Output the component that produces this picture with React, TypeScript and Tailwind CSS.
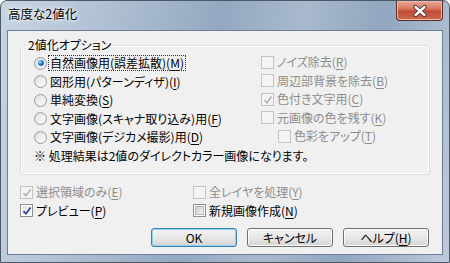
import React from "react";

const U = ({ c }: { c: string }) => <span className="underline underline-offset-[2px]">{c}</span>;

function Radio({ checked }: { checked?: boolean }) {
  return (
    <span className="relative flex h-[13px] w-[13px] shrink-0 items-center justify-center rounded-full border border-[#9a9da1] bg-gradient-to-br from-[#d8dadc] to-[#f8f8f8]">
      <span className="h-[9px] w-[9px] rounded-full bg-gradient-to-br from-[#e2e2e2] to-[#fbfbfb]" />
      {checked && (
        <span className="absolute left-[2.5px] top-[2.5px] h-[6px] w-[6px] rounded-full bg-[radial-gradient(circle_at_35%_35%,#9fd8ff_0%,#2a7fd0_45%,#0f3f8a_100%)]" />
      )}
    </span>
  );
}

function Check({ checked, disabled }: { checked?: boolean; disabled?: boolean }) {
  return (
    <span
      className={
        "relative flex h-[13px] w-[13px] shrink-0 items-center justify-center border " +
        (disabled ? "border-[#c4c4c4] bg-[#f4f4f4]" : "border-[#8f8f8f] bg-white")
      }
    >
      {!disabled && !checked && (
        <span className="h-[9px] w-[9px] border border-[#b6b6b6] bg-gradient-to-br from-[#cfcfcf] to-[#f2f2f2]" />
      )}
      {!disabled && checked && (
        <span className="h-[9px] w-[9px] bg-gradient-to-br from-[#e4e4e4] to-[#fafafa]" />
      )}
      {checked && (
        <svg className="absolute left-[1px] top-[1px]" width="10" height="10" viewBox="0 0 10 10">
          <path
            d="M1.5 5.2 L4 7.8 L8.6 1.6"
            fill="none"
            stroke={disabled ? "#b5b5b5" : "#2c418e"}
            strokeWidth="1.7"
          />
        </svg>
      )}
    </span>
  );
}

function RadioRow({ checked, children, focus }: { checked?: boolean; children: React.ReactNode; focus?: boolean }) {
  return (
    <div className="flex h-[18.5px] items-center gap-[2px]">
      <Radio checked={checked} />
      <span className={"px-[1px] leading-[14px] " + (focus ? "outline outline-1 outline-dotted outline-[#333]" : "")}>{children}</span>
    </div>
  );
}

function CheckRow({
  checked,
  disabled,
  children,
  className = "",
}: {
  checked?: boolean;
  disabled?: boolean;
  children: React.ReactNode;
  className?: string;
}) {
  return (
    <div className={"flex h-[18.5px] items-center gap-[3px] " + className}>
      <Check checked={checked} disabled={disabled} />
      <span className={disabled ? "text-[#8d8d8d]" : "text-[#000]"}>{children}</span>
    </div>
  );
}

function Btn({ children, def }: { children: React.ReactNode; def?: boolean }) {
  return (
    <div
      className={
        "flex h-[19px] w-[86px] items-center justify-center rounded-[3px] border bg-gradient-to-b from-[#f3f3f3] via-[#e8e8e8] to-[#d3d3d3] text-[#000] " +
        (def ? "border-[#3c7fb1] shadow-[inset_0_0_0_1px_#8fd3f5]" : "border-[#707070] shadow-[inset_0_0_0_1px_#fbfbfb]")
      }
    >
      {children}
    </div>
  );
}

export default function App() {
  return (
    <div className="h-[263px] w-[450px] overflow-hidden font-['Noto_Sans_CJK_JP',sans-serif] text-[12px] text-[#000] [font-feature-settings:'palt']">
      <div className="flex h-full w-full flex-col rounded-t-[7px] border border-[#4d5866] bg-[linear-gradient(100deg,#c7d4e2_0%,#b2c2d5_20%,#93a8c1_45%,#a8b9cd_62%,#91a6bf_78%,#bccadb_100%)]">
        <div className="flex h-[29px] shrink-0 items-start justify-between">
          <div className="pl-[7px] pt-[5px] text-[12.5px] leading-[16px] text-black [text-shadow:0_0_6px_#ffffff,0_0_3px_#ffffff]">
            高度な2値化
          </div>
          <div className="mr-[6px] flex h-[20px] w-[47px] items-center justify-center rounded-b-[4px] border border-t-0 border-[#5a2c26] bg-[linear-gradient(180deg,#e9a99b_0%,#d9785f_40%,#c24a33_55%,#cf6a4f_100%)] shadow-[inset_0_0_0_1px_#f0b8a8]">
            <svg width="14" height="12" viewBox="0 0 14 12">
              <path d="M2.5 2 L11.5 10 M11.5 2 L2.5 10" stroke="#4a2a26" strokeWidth="4.2" strokeLinecap="round" />
              <path d="M2.5 2 L11.5 10 M11.5 2 L2.5 10" stroke="#ffffff" strokeWidth="2.4" strokeLinecap="round" />
            </svg>
          </div>
        </div>
        <div className="mx-[6px] mb-[7px] flex-1 border border-[#6e7f95] bg-[#f0f0f0] px-[12px] pt-[6px]">
          <fieldset className="h-[138px] rounded-[3px] border border-[#d5dfe5] pl-[6px] shadow-[inset_0_0_0_1px_#ffffff]">
            <legend className="px-[1px] leading-[16px]">2値化オプション</legend>
            <div className="ml-[7px] mt-[1px] grid grid-cols-[227px_1fr]">
              <div className="flex flex-col">
                <RadioRow checked focus>
                  自然画像用(誤差拡散)(<U c="M" />)
                </RadioRow>
                <RadioRow>
                  図形用(パターンディザ)(<U c="I" />)
                </RadioRow>
                <RadioRow>
                  単純変換(<U c="S" />)
                </RadioRow>
                <RadioRow>
                  文字画像(スキャナ取り込み)用(<U c="F" />)
                </RadioRow>
                <RadioRow>
                  文字画像(デジカメ撮影)用(<U c="D" />)
                </RadioRow>
              </div>
              <div className="-mt-[1px] flex flex-col">
                <CheckRow disabled>
                  ノイズ除去(<U c="R" />)
                </CheckRow>
                <CheckRow disabled>
                  周辺部背景を除去(<U c="B" />)
                </CheckRow>
                <CheckRow disabled checked>
                  色付き文字用(<U c="C" />)
                </CheckRow>
                <CheckRow disabled>
                  元画像の色を残す(<U c="K" />)
                </CheckRow>
                <CheckRow disabled className="ml-[17px]">
                  色彩をアップ(<U c="T" />)
                </CheckRow>
              </div>
            </div>
            <div className="ml-[7px] flex h-[18.5px] items-center">※ 処理結果は2値のダイレクトカラー画像になります。</div>
          </fieldset>
          <div className="mt-[8px] grid grid-cols-[173px_1fr]">
            <div className="flex flex-col">
              <CheckRow disabled checked>
                選択領域のみ(<U c="E" />)
              </CheckRow>
              <CheckRow checked>
                プレビュー(<U c="P" />)
              </CheckRow>
            </div>
            <div className="flex flex-col">
              <CheckRow disabled>
                全レイヤを処理(<U c="Y" />)
              </CheckRow>
              <CheckRow>
                新規画像作成(<U c="N" />)
              </CheckRow>
            </div>
          </div>
          <div className="mt-[8px] flex justify-end gap-[10px] pr-[1px]">
            <Btn def>OK</Btn>
            <Btn>キャンセル</Btn>
            <Btn>
              ヘルプ(<U c="H" />)
            </Btn>
          </div>
        </div>
      </div>
    </div>
  );
}
